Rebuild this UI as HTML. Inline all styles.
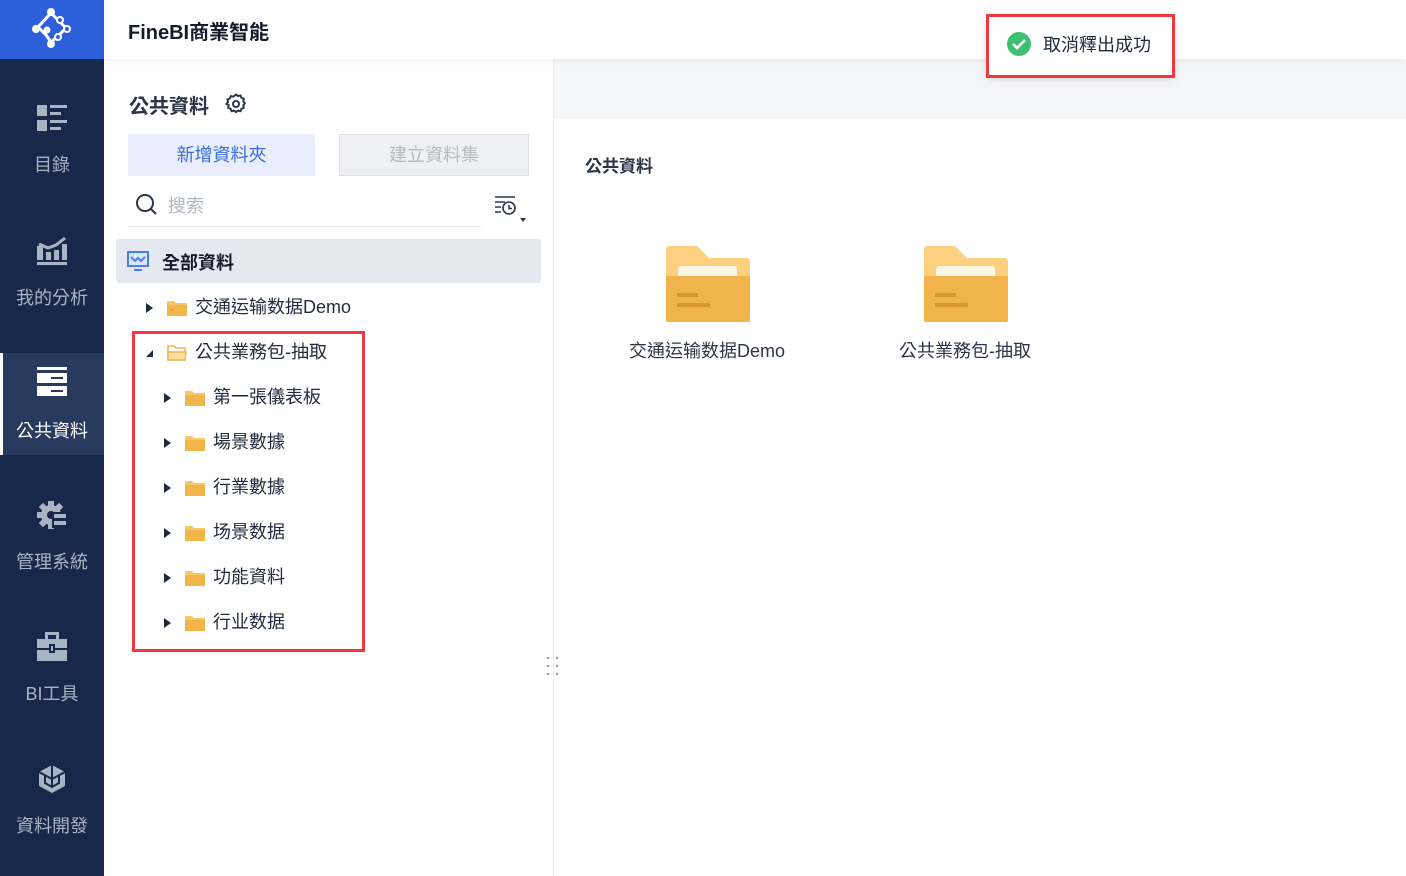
<!DOCTYPE html>
<html><head><meta charset="utf-8"><style>
*{margin:0;padding:0;box-sizing:border-box}
body{width:1406px;height:876px;overflow:hidden;background:#fff;font-family:"Liberation Sans","Noto Sans CJK TC",sans-serif;color:#1f2a3d;position:relative}
.abs{position:absolute}
#side{left:0;top:0;width:104px;height:876px;background:#18284a}
#logo{left:0;top:0;width:104px;height:59px;background:#2c5fd9}
.nav{left:0;width:104px;height:102px;text-align:center;color:#a9b3c4;font-size:18px}
.nav svg{display:block;margin:0 auto 18px}
.nav.act{background:#283a5d;color:#fff;border-left:3px solid #fff}
#hdr{left:104px;top:0;width:1302px;height:59px;background:#fff;box-shadow:0 2px 6px rgba(0,0,0,.06);z-index:2}
.row{left:0;height:45px;line-height:45px;font-size:18px;color:#232d3f;white-space:nowrap}
.tri{display:inline-block;width:0;height:0;border-top:5px solid transparent;border-bottom:5px solid transparent;border-left:7px solid #1f2a3d;vertical-align:middle;margin-right:14px}
.fd{display:inline-block;vertical-align:middle;margin-right:8px}
</style></head><body>
<div id="side" class="abs"></div>
<div id="logo" class="abs"><svg width="104" height="59" viewBox="0 0 104 59"><g stroke="#fff" stroke-width="3" fill="none"><path d="M51 13 L38 27 L46 35 L51 42 M51 13 L60 22 L66 28 L58 36 L51 42"/></g><g fill="#fff"><circle cx="51" cy="12" r="4"/><circle cx="36" cy="29" r="4"/><circle cx="51" cy="44" r="4"/><circle cx="47" cy="30" r="3.5"/></g><g stroke="#fff" stroke-width="2" fill="#2c5fd9"><circle cx="60" cy="20" r="3"/><circle cx="67" cy="29" r="3"/><circle cx="58" cy="37" r="3"/></g></svg></div>
<div class="nav abs" style="top:105px"><svg width="30" height="28" viewBox="0 0 30 28"><g fill="#a9b3c4"><rect x="0" y="0" width="10" height="11"/><rect x="0" y="15" width="10" height="11"/><rect x="13" y="0" width="17" height="3"/><rect x="13" y="7" width="11" height="3"/><rect x="13" y="15" width="17" height="3"/><rect x="13" y="22" width="11" height="3"/></g></svg>目錄</div>
<div class="nav abs" style="top:236px"><svg width="30" height="30" viewBox="0 0 30 30"><g fill="#a9b3c4"><rect x="0" y="10" width="6" height="14"/><rect x="9" y="16" width="5" height="8"/><rect x="17" y="14" width="5" height="10"/><rect x="25" y="8" width="5" height="16"/><rect x="0" y="26" width="30" height="3"/></g><path d="M2 8 L11 12 L19 9 L28 2" stroke="#a9b3c4" stroke-width="3" fill="none"/></svg>我的分析</div>
<div class="nav abs act" style="top:353px;height:102px;padding-top:14px"><svg width="30" height="30" viewBox="0 0 30 30" style="margin-left:34px;margin-bottom:20px"><g fill="#fff"><rect x="0" y="0" width="30" height="3"/><rect x="0" y="6" width="30" height="10"/><rect x="0" y="19" width="30" height="10"/></g><rect x="14" y="10" width="12" height="2" fill="#283a5d"/><rect x="14" y="23" width="12" height="2" fill="#283a5d"/></svg><span style="margin-left:-3px">公共資料</span></div>
<div class="nav abs" style="top:500px"><svg width="30" height="30" viewBox="0 0 30 30"><circle cx="14" cy="15" r="10" fill="#a9b3c4"/><g fill="#a9b3c4"><rect x="11" y="1" width="6" height="6"/><rect x="11" y="23" width="6" height="6"/><rect x="0" y="12" width="6" height="6"/><rect x="3" y="4" width="6" height="6" transform="rotate(45 6 7)"/><rect x="3" y="20" width="6" height="6" transform="rotate(45 6 23)"/><rect x="19" y="4" width="6" height="6" transform="rotate(45 22 7)"/></g><circle cx="14" cy="15" r="4" fill="#18284a"/><rect x="15" y="12" width="15" height="16" fill="#18284a"/><rect x="17" y="14" width="12" height="4" fill="#a9b3c4"/><rect x="17" y="21" width="12" height="4" fill="#a9b3c4"/></svg>管理系統</div>
<div class="nav abs" style="top:632px"><svg width="30" height="30" viewBox="0 0 30 30"><g fill="#a9b3c4"><rect x="8" y="0" width="14" height="3"/><rect x="8" y="0" width="3" height="8"/><rect x="19" y="0" width="3" height="8"/><rect x="0" y="7" width="30" height="9"/><rect x="0" y="18" width="30" height="11"/></g><rect x="12" y="12" width="6" height="9" fill="#18284a"/><rect x="14" y="14" width="2" height="5" fill="#a9b3c4"/></svg>BI工具</div>
<div class="nav abs" style="top:764px"><svg width="30" height="30" viewBox="0 0 30 30"><path d="M15 1L28 8V22L15 29L2 22V8Z" fill="#a9b3c4"/><path d="M15 1V15M2 8L15 15L28 8M8 12V19L15 23L22 19V12M15 15V23" stroke="#18284a" stroke-width="2" fill="none"/></svg>資料開發</div>
<div id="hdr" class="abs"><div class="abs" style="left:24px;top:16px;font-size:20px;font-weight:bold;color:#141c2b">FineBI商業智能</div></div>
<div class="abs" style="left:553px;top:59px;width:853px;height:60px;background:#f5f6f8"></div>
<div class="abs" style="left:553px;top:59px;width:1px;height:817px;background:#eceef2"></div>
<div class="abs" style="left:129px;top:90px;font-size:20px;font-weight:bold;color:#2c3648">公共資料</div>
<svg class="abs" style="left:224px;top:92px" width="24" height="24" viewBox="0 0 24 24"><path d="M12 2.5l2 1.5 2.5-.5 1 2.3 2.3 1-.5 2.5 1.5 2-1.5 2 .5 2.5-2.3 1-1 2.3-2.5-.5-2 1.5-2-1.5-2.5.5-1-2.3-2.3-1 .5-2.5L2.5 12 4 10 3.5 7.5l2.3-1 1-2.3 2.5.5z" fill="none" stroke="#2c3648" stroke-width="2"/><circle cx="12" cy="12" r="3" fill="none" stroke="#2c3648" stroke-width="2"/></svg>
<div class="abs" style="left:128px;top:134px;width:187px;height:42px;background:#e8eefb;color:#3d6de0;font-size:18px;line-height:42px;text-align:center;border-radius:2px">新增資料夾</div>
<div class="abs" style="left:339px;top:134px;width:190px;height:42px;background:#eef0f3;border:1px solid #dde0e5;color:#b5bac3;font-size:18px;line-height:40px;text-align:center">建立資料集</div>
<svg class="abs" style="left:135px;top:193px" width="24" height="24" viewBox="0 0 24 24"><circle cx="10" cy="10" r="8" fill="none" stroke="#2c3648" stroke-width="2"/><path d="M16 16l5 5" stroke="#2c3648" stroke-width="2"/></svg>
<div class="abs" style="left:168px;top:192px;font-size:18px;color:#b0b6c0">搜索</div>
<div class="abs" style="left:128px;top:226px;width:353px;height:1px;background:#e6e8ec"></div>
<svg class="abs" style="left:494px;top:196px" width="34" height="30" viewBox="0 0 34 30"><g stroke="#2c3648" stroke-width="1.6" fill="none"><path d="M1 1h20M1 6h10M1 11h6M1 16h6"/><circle cx="15" cy="12" r="6"/><path d="M15 9v3.5h3"/></g><path d="M26 22h6l-3 4z" fill="#2c3648"/></svg>
<div class="abs" style="left:116px;top:239px;width:425px;height:44px;background:#e5e8ef;border-radius:3px"></div>
<svg class="abs" style="left:127px;top:251px" width="22" height="21" viewBox="0 0 22 21"><rect x="1" y="1" width="20" height="14" fill="#dbe6fb" stroke="#4a7ee8" stroke-width="2"/><path d="M4 6l4 4 3-3 3 3 4-4" stroke="#4a7ee8" stroke-width="2" fill="none"/><rect x="7" y="18" width="8" height="2" fill="#4a7ee8"/></svg>
<div class="abs" style="left:162px;top:249px;font-size:18px;font-weight:bold;color:#141c2b">全部資料</div>
<div class="row abs" style="left:146px;top:285px"><span class="tri"></span><svg class="fd" width="20" height="16" viewBox="0 0 20 16"><path d="M0 1h7l2 2h11v13H0z" fill="#f6c86a"/><rect x="0" y="5" width="20" height="11" fill="#f1b54a"/><rect x="3" y="9" width="4" height="1.5" fill="#e09a2a"/></svg>交通运输数据Demo</div>
<div class="row abs" style="left:146px;top:330px"><span class="tri" style="border:none;width:0;height:0;border-left:7px solid transparent;border-bottom:7px solid #1f2a3d;margin-right:14px"></span><svg class="fd" width="20" height="16" viewBox="0 0 20 16"><path d="M1 1h6l2 2h9v12H1z" fill="none" stroke="#f1b54a" stroke-width="1.6"/><path d="M1 7h18l-1 8H1z" fill="#fbe0a6" stroke="#f1b54a" stroke-width="1.4"/></svg>公共業務包-抽取</div>
<div class="row abs" style="left:164px;top:375px"><span class="tri"></span><svg class="fd" width="20" height="16" viewBox="0 0 20 16"><path d="M0 1h7l2 2h11v13H0z" fill="#f6c86a"/><rect x="0" y="5" width="20" height="11" fill="#f1b54a"/></svg>第一張儀表板</div>
<div class="row abs" style="left:164px;top:420px"><span class="tri"></span><svg class="fd" width="20" height="16" viewBox="0 0 20 16"><path d="M0 1h7l2 2h11v13H0z" fill="#f6c86a"/><rect x="0" y="5" width="20" height="11" fill="#f1b54a"/></svg>場景數據</div>
<div class="row abs" style="left:164px;top:465px"><span class="tri"></span><svg class="fd" width="20" height="16" viewBox="0 0 20 16"><path d="M0 1h7l2 2h11v13H0z" fill="#f6c86a"/><rect x="0" y="5" width="20" height="11" fill="#f1b54a"/></svg>行業數據</div>
<div class="row abs" style="left:164px;top:510px"><span class="tri"></span><svg class="fd" width="20" height="16" viewBox="0 0 20 16"><path d="M0 1h7l2 2h11v13H0z" fill="#f6c86a"/><rect x="0" y="5" width="20" height="11" fill="#f1b54a"/></svg>场景数据</div>
<div class="row abs" style="left:164px;top:555px"><span class="tri"></span><svg class="fd" width="20" height="16" viewBox="0 0 20 16"><path d="M0 1h7l2 2h11v13H0z" fill="#f6c86a"/><rect x="0" y="5" width="20" height="11" fill="#f1b54a"/></svg>功能資料</div>
<div class="row abs" style="left:164px;top:600px"><span class="tri"></span><svg class="fd" width="20" height="16" viewBox="0 0 20 16"><path d="M0 1h7l2 2h11v13H0z" fill="#f6c86a"/><rect x="0" y="5" width="20" height="11" fill="#f1b54a"/></svg>行业数据</div>
<div class="abs" style="left:132px;top:331px;width:233px;height:321px;border:3px solid #ee3a3f"></div>
<svg class="abs" style="left:545px;top:655px" width="16" height="22"><g fill="#9aa1ad"><circle cx="3" cy="3" r="1.3"/><circle cx="12" cy="3" r="1.3"/><circle cx="3" cy="11" r="1.3"/><circle cx="12" cy="11" r="1.3"/><circle cx="3" cy="19" r="1.3"/><circle cx="12" cy="19" r="1.3"/></g></svg>
<div class="abs" style="left:585px;top:152px;font-size:17px;font-weight:bold;color:#2c3648">公共資料</div>
<svg class="abs" style="left:666px;top:246px" width="84" height="78" viewBox="0 0 84 78"><path d="M3 0h28l12 12h38a3 3 0 0 1 3 3v60H0V3a3 3 0 0 1 3-3z" fill="#fcd07f"/><rect x="12" y="20" width="59" height="16" rx="3" fill="#fdf6e4"/><rect x="0" y="30" width="84" height="46" rx="2" fill="#f1b44c"/><rect x="11" y="47" width="21" height="4" fill="#d9952e"/><rect x="11" y="57" width="33" height="4" fill="#d9952e"/></svg>
<svg class="abs" style="left:924px;top:246px" width="84" height="78" viewBox="0 0 84 78"><path d="M3 0h28l12 12h38a3 3 0 0 1 3 3v60H0V3a3 3 0 0 1 3-3z" fill="#fcd07f"/><rect x="12" y="20" width="59" height="16" rx="3" fill="#fdf6e4"/><rect x="0" y="30" width="84" height="46" rx="2" fill="#f1b44c"/><rect x="11" y="47" width="21" height="4" fill="#d9952e"/><rect x="11" y="57" width="33" height="4" fill="#d9952e"/></svg>
<div class="abs" style="left:629px;top:337px;font-size:18px;color:#2c3648">交通运输数据Demo</div>
<div class="abs" style="left:899px;top:337px;font-size:18px;color:#2c3648">公共業務包-抽取</div>
<div class="abs" style="left:986px;top:14px;width:189px;height:64px;background:#fff;border:3px solid #ee3a3f;z-index:5;box-shadow:0 2px 8px rgba(0,0,0,.1)"></div>
<svg class="abs" style="left:1006px;top:31px;z-index:6" width="26" height="26"><circle cx="13" cy="13" r="12" fill="#3fbf72"/><path d="M7 13l4 4 8-8" stroke="#fff" stroke-width="2.6" fill="none"/></svg>
<div class="abs" style="left:1043px;top:31px;font-size:18px;color:#1f2a3d;z-index:6">取消釋出成功</div>
</body></html>
